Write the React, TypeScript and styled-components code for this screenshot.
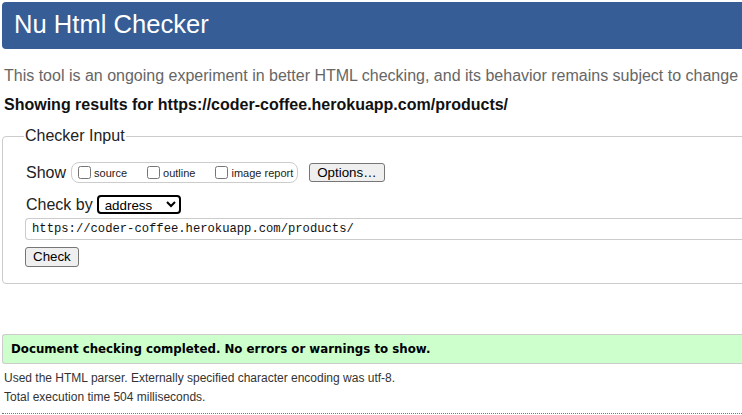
import React from "react";
import styled, { createGlobalStyle } from "styled-components";

const Global = createGlobalStyle`
  html, body { margin: 0; padding: 0; overflow: hidden; background: #fff; }
  body { font-family: "Liberation Sans", Arial, sans-serif; color: #1a1a1a; }
`;

const Page = styled.div`
  width: 820px;
  padding: 2px 0 0 2px;
  box-sizing: border-box;
`;

const Header = styled.header`
  height: 47px;
  background: #365d95;
  border-radius: 4px 0 0 4px;
  padding-left: 12px;
  display: flex;
  align-items: center;
`;

const Title = styled.h1`
  margin: 0;
  font-weight: normal;
  font-size: 25.6px;
  color: #fff;
  line-height: 1;
  padding-bottom: 2px;
`;

const Intro = styled.p`
  margin: 17px 0 0 2px;
  font-size: 16px;
  line-height: 20px;
  color: #666;
  white-space: nowrap;
`;

const Showing = styled.p`
  margin: 9px 0 0 2px;
  font-size: 16px;
  line-height: 20px;
  font-weight: bold;
  color: #111;
  white-space: nowrap;
`;

const Fieldset = styled.fieldset`
  margin: 12px 0 0 0;
  padding: 0 0 16px 23px;
  border: 1px solid #ccc;
  border-radius: 4px 0 0 4px;
  min-width: 0;
`;

const Legend = styled.legend`
  margin-left: -2px;
  padding: 0 1px;
  font-size: 16px;
  line-height: 18px;
  color: #222;
`;

const Row = styled.div<{ $top: number }>`
  display: flex;
  align-items: center;
  margin-top: ${(p) => p.$top}px;
  font-size: 16px;
  line-height: 18px;
  color: #222;
`;

const Label = styled.span`
  font-size: 16px;
  line-height: 18px;
`;

const Group = styled.div`
  margin-left: 5px;
  height: 19px;
  display: flex;
  align-items: center;
  border: 1px solid #ccc;
  border-radius: 8px;
  padding: 0 4px 0 6px;
`;

const Option = styled.label<{ $gap: number }>`
  display: flex;
  align-items: center;
  font-size: 11px;
  color: #222;
  margin-right: ${(p) => p.$gap}px;
`;

const Box = styled.input`
  width: 13px;
  height: 13px;
  margin: 0 3px 0 0;
`;

const Button = styled.button<{ $left?: number; $h?: number }>`
  margin-left: ${(p) => p.$left ?? 0}px;
  box-sizing: border-box;
  font-family: "Liberation Sans", Arial, sans-serif;
  font-size: 13.33px;
  color: #000;
  background: #efefef;
  border: 1px solid #767676;
  border-radius: 3px;
  padding: 0 7px;
  height: ${(p) => p.$h ?? 20}px;
  line-height: 16px;
`;

const Select = styled.select`
  margin-left: 4px;
  box-sizing: border-box;
  width: 84px;
  height: 19px;
  font-family: "Liberation Sans", Arial, sans-serif;
  font-size: 13.33px;
  line-height: 15px;
  border: 2px solid #000;
  border-radius: 4px;
  padding: 0 0 0 2px;
  background: #fff;
  color: #000;
`;

const UrlInput = styled.input`
  display: block;
  box-sizing: border-box;
  width: 100%;
  height: 22px;
  margin: 4px 0 0 -1px;
  padding: 0 6px;
  border: 1px solid #ccc;
  border-right: none;
  border-radius: 4px 0 0 4px;
  font-family: "Liberation Mono", "DejaVu Sans Mono", monospace;
  font-size: 12.2px;
  color: #111;
`;

const Success = styled.div`
  margin-top: 50px;
  height: 28px;
  display: flex;
  align-items: center;
  padding-left: 8px;
  background: #ccffcc;
  border: 1px solid #ccc;
  border-right: none;
  border-radius: 3px 0 0 3px;
  font-family: "DejaVu Sans", Verdana, sans-serif;
  font-weight: bold;
  font-size: 11.8px;
  color: #000;
`;

const Note = styled.p<{ $top: number }>`
  margin: ${(p) => p.$top}px 0 0 2px;
  font-size: 12px;
  line-height: 18px;
  color: #333;
`;

const Rule = styled.hr`
  margin: 7px 0 0 0;
  border: none;
  border-top: 1px dotted #777;
  height: 0;
`;

export default function App() {
  return (
    <Page>
      <Global />
      <Header>
        <Title>Nu Html Checker</Title>
      </Header>
      <Intro>
        This tool is an ongoing experiment in better HTML checking, and its behavior remains subject to change
      </Intro>
      <Showing>Showing results for https://coder-coffee.herokuapp.com/products/</Showing>
      <Fieldset>
        <Legend>Checker Input</Legend>
        <Row $top={17}>
          <Label>Show</Label>
          <Group>
            <Option $gap={20}>
              <Box type="checkbox" />
              source
            </Option>
            <Option $gap={20}>
              <Box type="checkbox" />
              outline
            </Option>
            <Option $gap={0}>
              <Box type="checkbox" />
              image report
            </Option>
          </Group>
          <Button $left={11} $h={19}>Options…</Button>
        </Row>
        <Row $top={12}>
          <Label>Check by</Label>
          <Select defaultValue="address">
            <option value="address">address</option>
            <option value="file">file upload</option>
            <option value="text">text input</option>
          </Select>
        </Row>
        <UrlInput type="text" defaultValue="https://coder-coffee.herokuapp.com/products/" />
        <Row $top={7}>
          <Button $left={-1}>Check</Button>
        </Row>
      </Fieldset>
      <Success>Document checking completed. No errors or warnings to show.</Success>
      <Note $top={5}>Used the HTML parser. Externally specified character encoding was utf-8.</Note>
      <Note $top={1}>Total execution time 504 milliseconds.</Note>
      <Rule />
    </Page>
  );
}
